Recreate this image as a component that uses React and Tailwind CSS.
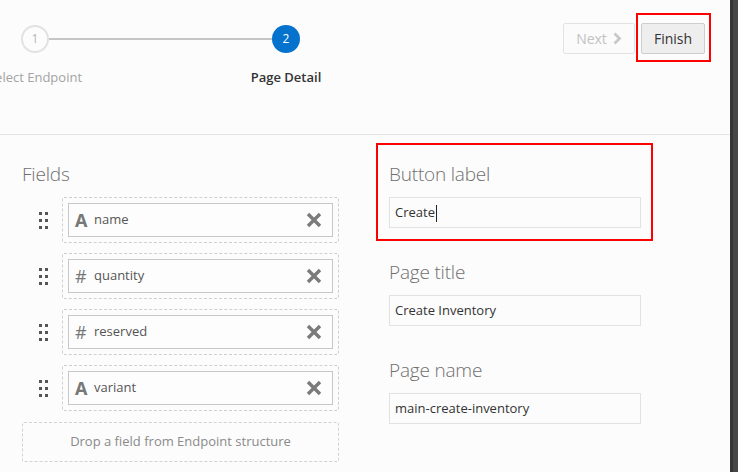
const fields = [
  { icon: 'A', name: 'name' },
  { icon: '#', name: 'quantity' },
  { icon: '#', name: 'reserved' },
  { icon: 'A', name: 'variant' },
];

// Six-dot drag handle
function DragHandle() {
  return (
    <div className="grid grid-cols-2 gap-x-[3px] gap-y-[4px] w-[9px]">
      {[0, 1, 2, 3, 4, 5].map((i) => (
        <span key={i} className="w-[3px] h-[3px] bg-[#555]" />
      ))}
    </div>
  );
}

function RemoveIcon() {
  return (
    <svg width="16" height="16" viewBox="0 0 16 16" className="ml-auto">
      <path d="M2 2 L14 14 M14 2 L2 14" stroke="#7b7b7b" strokeWidth="3.4" />
    </svg>
  );
}

function FieldRow({ field }) {
  return (
    <div className="flex items-center">
      <div className="w-[40px] pl-[17px]">
        <DragHandle />
      </div>
      <div className="w-[277px] h-[46px] border border-dashed border-[#cfcfcf] rounded-[2px] p-[5px]">
        <div className="h-full border border-[#c8c8c8] bg-[#fdfdfd] flex items-center pl-[6px] pr-[10px]">
          <span
            className={
              field.icon === 'A'
                ? 'w-[19px] text-[18px] font-bold text-[#777] leading-none'
                : 'w-[19px] text-[18px] font-normal text-[#777] leading-none'
            }
          >
            {field.icon}
          </span>
          <span className="text-[13px] text-[#555]">{field.name}</span>
          <RemoveIcon />
        </div>
      </div>
    </div>
  );
}

function TextInput({ value, caret }) {
  return (
    <div className="w-[252px] h-[31px] border border-[#e2e2e2] bg-[#fcfcfc] flex items-center px-[5px] pt-px text-[13px] text-[#333]">
      {value}
      {caret && <span className="w-px h-[17px] bg-[#222] ml-[1px]" />}
    </div>
  );
}

function Label({ children }) {
  return <div className="text-[19px] font-light text-[#6f6f6f] leading-[26px] tracking-[-0.2px]">{children}</div>;
}

export default function App() {
  return (
    <div className="w-[738px] h-[472px] overflow-hidden bg-[#fcfcfc] flex font-['Open_Sans',sans-serif]">
      <div className="flex-1 flex flex-col overflow-hidden">
        {/* Header: stepper + buttons */}
        <div className="h-[135px] border-b border-[#e3e3e3] flex justify-between">
          <div className="pt-[25px]">
            <div className="flex items-center pl-[21px]">
              <div className="w-[28px] h-[28px] rounded-full border-2 border-[#e2e2e2] flex items-center justify-center text-[12px] text-[#b5b5b5]">
                1
              </div>
              <div className="w-[223px] h-[2px] bg-[#c6c6c6]" />
              <div className="w-[28px] h-[28px] rounded-full bg-[#0572ce] flex items-center justify-center text-[12px] text-white">
                2
              </div>
            </div>
            <div className="flex mt-[15px] -ml-[25px] text-[13px]">
              <div className="w-[120px] text-center text-[#a3a3a3]">Select Endpoint</div>
              <div className="w-[120px] ml-[131px] text-center text-[#333] font-semibold">Page Detail</div>
            </div>
          </div>
          <div className="flex items-start pr-[19px]">
            <button className="mt-[23px] w-[72px] h-[31px] border border-[#e3e3e3] rounded-[2px] bg-[#fbfbfb] flex items-center justify-center gap-[6px] text-[14px] text-[#c2c2c2]">
              Next
              <svg width="9" height="13" viewBox="0 0 9 13">
                <path d="M1.5 1.5 L6.5 6.5 L1.5 11.5" fill="none" stroke="#c8c8c8" strokeWidth="2.8" />
              </svg>
            </button>
            <div className="mt-[13px] ml-px border-2 border-[#ff0000] pl-[3px] pr-[4px] pt-[8px] pb-[6px]">
              <button className="w-[64px] h-[31px] border border-[#cdcdcd] rounded-[2px] bg-[#eeeeee] text-[14px] text-[#333]">
                Finish
              </button>
            </div>
          </div>
        </div>

        {/* Body */}
        <div className="flex">
          <div className="w-[339px] pl-[22px] pt-[26px]">
            <Label>Fields</Label>
            <div className="mt-[10px] flex flex-col gap-[10px] -ml-[22px] pl-[22px]">
              {fields.map((f) => (
                <FieldRow key={f.name} field={f} />
              ))}
            </div>
            <div className="mt-[11px] w-[317px] h-[40px] border border-dashed border-[#d2d2d2] rounded-[2px] flex items-center justify-center text-[13px] text-[#8a8a8a]">
              Drop a field from Endpoint structure
            </div>
          </div>

          <div className="ml-[37px] pt-[8px]">
            <div className="w-[277px] border-2 border-[#ff0000] pl-[11px] pt-[16px] pb-[11px]">
              <Label>Button label</Label>
              <div className="mt-[10px]">
                <TextInput value="Create" caret />
              </div>
            </div>
            <div className="pl-[13px] mt-[18px]">
              <Label>Page title</Label>
              <div className="mt-[10px]">
                <TextInput value="Create Inventory" />
              </div>
              <div className="mt-[31px]">
                <Label>Page name</Label>
              </div>
              <div className="mt-[10px]">
                <TextInput value="main-create-inventory" />
              </div>
            </div>
          </div>
        </div>
      </div>
      <div className="w-[8px] border-l-[3px] border-[#363636] bg-[#474747]" />
    </div>
  );
}
